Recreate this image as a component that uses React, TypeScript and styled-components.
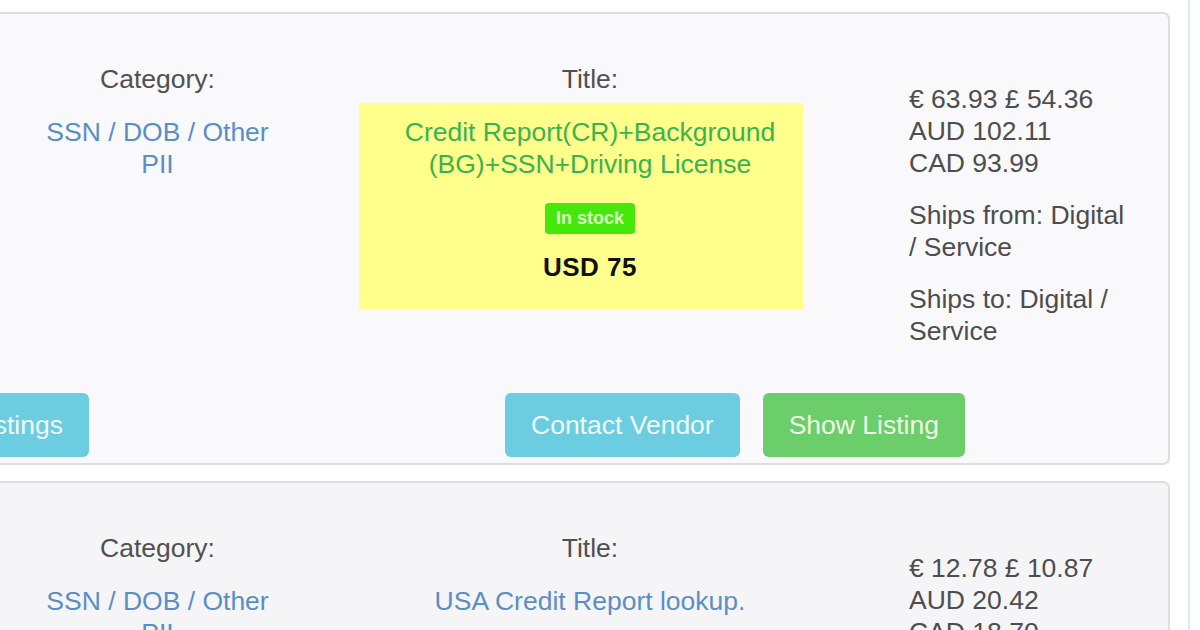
import styled, { createGlobalStyle } from "styled-components";

const GlobalStyle = createGlobalStyle`
  html, body {
    margin: 0;
    padding: 0;
    background: #ffffff;
    overflow: hidden;
  }
  body {
    font-family: "Liberation Sans", Arial, Helvetica, sans-serif;
    font-size: 26.5px;
    line-height: 32px;
    color: #4a4a4a;
  }
`;

const Page = styled.div`
  display: flex;
  width: 1200px;
  height: 630px;
  overflow: hidden;
`;

const Main = styled.main`
  flex: 0 0 1170px;
  padding-top: 12px;
  display: flex;
  flex-direction: column;
  gap: 16px;
`;

const Rule = styled.div`
  flex: 0 0 2px;
  margin-left: 18px;
  background: #d6edf2;
`;

const Card = styled.section<{ $bg: string }>`
  margin-left: -200px;
  background: ${({ $bg }) => $bg};
  border: 2px solid #dedede;
  border-radius: 7px;
  flex-shrink: 0;
`;

const Row = styled.div`
  display: grid;
  grid-template-columns: 228px 255px 536px 1fr;
  align-items: start;
`;

const ImageCol = styled.div``;

const CategoryCol = styled.div`
  padding-top: 49px;
  text-align: center;
`;

const Label = styled.div`
  color: #505050;
`;

const Link = styled.a`
  display: block;
  margin-top: 21px;
  color: #5b8ec5;
  text-decoration: none;
  padding: 0 15px;
`;

const TitleCol = styled.div`
  padding-top: 49px;
  padding-left: 74px;
  text-align: center;
`;

const Highlight = styled.div<{ $on: boolean }>`
  margin-top: 8px;
  margin-right: 18px;
  padding: 13px 0 26px 18px;
  background: ${({ $on }) => ($on ? "#ffff8c" : "transparent")};
`;

const TitleText = styled.a<{ $featured: boolean }>`
  display: block;
  color: ${({ $featured }) => ($featured ? "#3ab34f" : "#5b8ec5")};
  text-decoration: none;
  padding: 0 10px;
`;

const StockBadge = styled.span`
  display: inline-block;
  margin-top: 23px;
  height: 31px;
  padding: 0 11px;
  border-radius: 4px;
  background: #45e80a;
  color: #d9ffc4;
  font-size: 18px;
  font-weight: bold;
  line-height: 31px;
`;

const Price = styled.div`
  margin-top: 17px;
  font-size: 26px;
  font-weight: bold;
  color: #111111;
  letter-spacing: 0.5px;
`;

const PriceCol = styled.div`
  padding: 69px 37px 0 88px;
  color: #4d4d4d;
`;

const Para = styled.p`
  margin: 0 0 20px;

  &:last-child {
    margin-bottom: 0;
  }
`;

const ButtonRow = styled.div`
  display: grid;
  grid-template-columns: 287px 1fr;
  padding: 46px 0 6px;
`;

const LeftCell = styled.div`
  display: flex;
  justify-content: flex-end;
`;

const RightCell = styled.div`
  display: flex;
  gap: 23px;
  padding-left: 416px;
`;

const Button = styled.button<{ $variant: "info" | "success" }>`
  height: 64px;
  padding: 0 26px;
  border: none;
  border-radius: 6px;
  font-family: inherit;
  font-size: 26.5px;
  line-height: 32px;
  cursor: pointer;
  background: ${({ $variant }) => ($variant === "info" ? "#6ccde0" : "#6ccd6b")};
  color: ${({ $variant }) => ($variant === "info" ? "#eefbfd" : "#eefbe4")};
`;

interface Listing {
  id: number;
  bg: string;
  category: string;
  title: string;
  featured: boolean;
  usd: string;
  prices: string[];
}

const listings: Listing[] = [
  {
    id: 1,
    bg: "#f9f8fa",
    category: "SSN / DOB / Other PII",
    title: "Credit Report(CR)+Background (BG)+SSN+Driving License",
    featured: true,
    usd: "USD 75",
    prices: ["€ 63.93 £ 54.36", "AUD 102.11", "CAD 93.99"],
  },
  {
    id: 2,
    bg: "#f5f5f7",
    category: "SSN / DOB / Other PII",
    title: "USA Credit Report lookup.",
    featured: false,
    usd: "USD 15",
    prices: ["€ 12.78 £ 10.87", "AUD 20.42", "CAD 18.70"],
  },
];

export default function App() {
  return (
    <Page>
      <GlobalStyle />
      <Main>
        {listings.map((l) => (
          <Card key={l.id} $bg={l.bg}>
            <Row>
              <ImageCol />
              <CategoryCol>
                <Label>Category:</Label>
                <Link href="#">{l.category}</Link>
              </CategoryCol>
              <TitleCol>
                <Label>Title:</Label>
                <Highlight $on={l.featured}>
                  <TitleText href="#" $featured={l.featured}>{l.title}</TitleText>
                  <StockBadge>In stock</StockBadge>
                  <Price>{l.usd}</Price>
                </Highlight>
              </TitleCol>
              <PriceCol>
                <Para>
                  {l.prices.map((p) => (
                    <div key={p}>{p}</div>
                  ))}
                </Para>
                <Para>Ships from: Digital / Service</Para>
                <Para>Ships to: Digital / Service</Para>
              </PriceCol>
            </Row>
            <ButtonRow>
              <LeftCell>
                <Button $variant="info">Vendor Listings</Button>
              </LeftCell>
              <RightCell>
                <Button $variant="info">Contact Vendor</Button>
                <Button $variant="success">Show Listing</Button>
              </RightCell>
            </ButtonRow>
          </Card>
        ))}
      </Main>
      <Rule />
    </Page>
  );
}
